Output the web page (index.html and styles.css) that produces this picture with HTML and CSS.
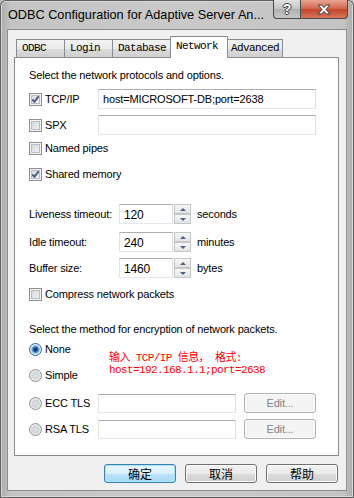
FILE: index.html
```html
<!DOCTYPE html>
<html lang="en">
<head>
    <meta charset="UTF-8">
    <meta name="viewport" content="width=device-width, initial-scale=1.0">
    <title>ODBC Configuration</title>
    <link rel="stylesheet" href="styles.css">
</head>
<body>

<div class="window">
    <div class="titlebar">
        <span class="title">ODBC Configuration for Adaptive Server An...</span>
        <div class="caption-buttons">
            <div class="cap-btn help">?</div>
            <div class="cap-btn close">
                <svg width="14" height="11" viewBox="0 0 14 11">
                    <path d="M1 1 L4.5 1 L7 3.6 L9.5 1 L13 1 L9 5.5 L13 10 L9.5 10 L7 7.4 L4.5 10 L1 10 L5 5.5 Z" fill="#fff" stroke="#3c3c3c" stroke-width="1" stroke-linejoin="round"/>
                </svg>
            </div>
        </div>
    </div>

    <div class="client">
        <div class="tabs">
            <div class="tab t-odbc">ODBC</div>
            <div class="tab t-login">Login</div>
            <div class="tab t-db">Database</div>
            <div class="tab t-net selected">Network</div>
            <div class="tab t-adv">Advanced</div>
        </div>

        <div class="panel">
            <div class="row r-heading">Select the network protocols and options.</div>

            <div class="row r-tcp">
                <span class="check-label"><span class="chk checked"></span>TCP/IP</span>
                <span class="textbox wide">host=MICROSOFT-DB;port=2638</span>
            </div>
            <div class="row r-spx">
                <span class="check-label"><span class="chk"></span>SPX</span>
                <span class="textbox wide"></span>
            </div>
            <div class="row r-pipes">
                <span class="check-label"><span class="chk"></span>Named pipes</span>
            </div>
            <div class="row r-shared">
                <span class="check-label"><span class="chk checked"></span>Shared memory</span>
            </div>

            <div class="row r-live">
                <span class="field-label">Liveness timeout:</span>
                <span class="textbox num">120</span>
                <span class="spinner"><span class="spin up"></span><span class="spin down"></span></span>
                <span class="unit">seconds</span>
            </div>
            <div class="row r-idle">
                <span class="field-label">Idle timeout:</span>
                <span class="textbox num">240</span>
                <span class="spinner"><span class="spin up"></span><span class="spin down"></span></span>
                <span class="unit">minutes</span>
            </div>
            <div class="row r-buf">
                <span class="field-label">Buffer size:</span>
                <span class="textbox num">1460</span>
                <span class="spinner"><span class="spin up"></span><span class="spin down"></span></span>
                <span class="unit">bytes</span>
            </div>
            <div class="row r-compress">
                <span class="check-label"><span class="chk"></span>Compress network packets</span>
            </div>

            <div class="row r-heading2">Select the method for encryption of network packets.</div>

            <div class="enc-top">
                <div class="enc-radios">
                    <div class="row r-none"><span class="radio-label"><span class="radio on"></span>None</span></div>
                    <div class="row r-simple"><span class="radio-label"><span class="radio"></span>Simple</span></div>
                </div>
                <div class="note">
                    <div>输入 TCP/IP 信息， 格式:</div>
                    <div>host=192.168.1.1;port=2638</div>
                </div>
            </div>
            <div class="row r-ecc">
                <span class="radio-label"><span class="radio"></span>ECC TLS</span>
                <span class="textbox tls"></span>
                <span class="btn disabled">Edit...</span>
            </div>
            <div class="row r-rsa">
                <span class="radio-label"><span class="radio"></span>RSA TLS</span>
                <span class="textbox tls"></span>
                <span class="btn disabled">Edit...</span>
            </div>
        </div>

        <div class="actions">
            <span class="btn dlg default">确定</span>
            <span class="btn dlg">取消</span>
            <span class="btn dlg">帮助</span>
        </div>
    </div>
</div>

</body>
</html>
```

FILE: styles.css
```css
body {
    margin: 0;
    background: #bdbdbd;
    font-family: "Liberation Sans", Arial, "Noto Sans CJK SC", sans-serif;
    font-size: 11px;
    letter-spacing: -0.15px;
    color: #000;
}
.window {
    width: 354px;
    height: 498px;
    box-sizing: border-box;
    padding: 0 7px 7px 7px;
    background: linear-gradient(90deg, #a9a9a9 0, #c4c4c4 3%, #c9c9c9 50%, #c4c4c4 97%, #a9a9a9 100%);
    box-shadow: inset 0 0 0 1px #5f5f5f, inset 0 0 0 2px #d8d8d8;
    border-radius: 6px 6px 0 0;
    display: flex;
    flex-direction: column;
}
.titlebar {
    height: 29px;
    display: flex;
    justify-content: space-between;
}
.title {
    margin-top: 7px;
    margin-left: 1px;
    font-size: 12.7px;
    letter-spacing: 0;
    line-height: 16px;
    white-space: nowrap;
}
.caption-buttons {
    display: flex;
    margin-right: -1px;
    height: 19px;
}
.cap-btn {
    height: 19px;
    box-sizing: border-box;
    border: 1px solid #4a4a4a;
    border-top: none;
    display: flex;
    align-items: center;
    justify-content: center;
}
.help {
    width: 27px;
    border-right: none;
    border-radius: 0 0 0 4px;
    background: linear-gradient(#e2e2e2, #c4c4c4 50%, #aeaeae 51%, #c8c8c8);
    color: #fff;
    font-weight: bold;
    font-size: 14px;
    text-shadow: 0 0 1px #333, 1px 0 0 #444, -1px 0 0 #444, 0 1px 0 #444, 0 -1px 0 #444;
}
.close {
    width: 48px;
    border-radius: 0 0 4px 0;
    background: linear-gradient(#e8a593, #d46b50 45%, #c2452a 55%, #d5785c);
}
.client {
    flex: 1;
    background: #f0f0f0;
    border: 1px solid #8e8e8e;
}
.tabs {
    display: flex;
    align-items: flex-end;
    height: 21px;
    margin-top: 6px;
    margin-left: 8px;
    position: relative;
    z-index: 1;
}
.tab {
    height: 18px;
    box-sizing: border-box;
    border: 1px solid #898c95;
    border-bottom: none;
    border-right: none;
    background: linear-gradient(#f2f2f2, #ebebeb 50%, #dddddd 51%, #cfcfcf);
    font-family: "Liberation Mono", "Noto Sans CJK SC", monospace;
    font-size: 11px;
    letter-spacing: -0.6px;
    line-height: 17px;
    padding-left: 5px;
}
.t-odbc { width: 48px; }
.t-login { width: 48px; }
.t-db { width: 60px; }
.t-net { width: 54px; }
.t-adv { width: 57px; border-right: 1px solid #898c95; }
.tab.selected {
    width: 58px;
    height: 22px;
    margin: 0 -2px -1px -2px;
    background: #fff;
    border-right: 1px solid #898c95;
    line-height: 18px;
    position: relative;
    z-index: 2;
}
.tab.selected + .tab { border-left: none; }
.panel {
    margin-left: 6px;
    width: 325px;
    height: 399px;
    box-sizing: border-box;
    border: 1px solid #898c95;
    background: #fff;
    padding: 9px 0 0 14px;
}
.row {
    display: flex;
    align-items: center;
    height: 20px;
    white-space: nowrap;
}
.r-heading { height: 16px; }
.r-tcp { margin-top: 6px; }
.r-spx { margin-top: 6px; }
.r-pipes { margin-top: 3px; }
.r-shared { margin-top: 6px; }
.r-live { margin-top: 20px; }
.r-idle { margin-top: 8px; }
.r-buf { margin-top: 6px; }
.r-compress { margin-top: 6px; }
.r-heading2 { margin-top: 17px; height: 16px; }
.enc-top {
    display: flex;
    margin-top: 2px;
}
.r-simple { margin-top: 6px; }
.r-ecc { margin-top: 8px; }
.r-rsa { margin-top: 6px; }
.check-label, .radio-label {
    display: flex;
    align-items: center;
    gap: 3px;
    width: 69px;
}
.chk {
    width: 13px;
    height: 13px;
    box-sizing: border-box;
    border: 1px solid #8e8f8f;
    background: linear-gradient(135deg, #d0d3d8, #f7f7f7);
    box-shadow: inset 0 0 0 1px #f4f4f4, inset 0 0 0 2px #b9bdc3;
    flex-shrink: 0;
}
.chk.checked {
    background-image: url("data:image/svg+xml,%3Csvg xmlns='http://www.w3.org/2000/svg' width='11' height='11' viewBox='0 0 11 11'%3E%3Cpath d='M2.2 5.4 L4.4 7.8 L8.8 2.2' fill='none' stroke='%234a5b86' stroke-width='1.9'/%3E%3C/svg%3E"), linear-gradient(135deg, #d0d3d8, #f7f7f7);
    background-position: center;
    background-repeat: no-repeat;
}
.radio {
    width: 13px;
    height: 13px;
    box-sizing: border-box;
    border-radius: 50%;
    border: 1px solid #8e8f8f;
    background: radial-gradient(circle at 50% 50%, #e2e4e7 0, #cfd2d7 3px, #f4f4f4 6px);
    flex-shrink: 0;
}
.radio.on {
    border-color: #2c628b;
    background: radial-gradient(circle at 50% 50%, #0f2a57 0, #1f4a8a 1.8px, #5fa1db 3.2px, #cfe6f9 4.6px, #f4f4f4 5.5px);
}
.textbox {
    height: 20px;
    box-sizing: border-box;
    border: 1px solid #abadb3;
    border-color: #abadb3 #dbdfe6 #e3e9ef #e2e3ea;
    background: #fff;
    padding: 2px 0 0 4px;
    line-height: 15px;
}
.wide {
    width: 218px;
}
.field-label {
    width: 90px;
}
.num {
    width: 54px;
    font-size: 12px;
    padding-top: 3px;
}
.spinner {
    width: 17px;
    height: 20px;
    margin-left: 1px;
    display: flex;
    flex-direction: column;
}
.spin {
    height: 10px;
    box-sizing: border-box;
    border: 1px solid #c6c6c6;
    background: linear-gradient(#f7f7f7, #e3e3e3);
    display: flex;
    align-items: center;
    justify-content: center;
}
.spin::after {
    content: "";
    border-left: 3px solid transparent;
    border-right: 3px solid transparent;
}
.spin.up::after { border-bottom: 3px solid #4d6185; }
.spin.down::after { border-top: 3px solid #4d6185; }
.unit {
    margin-left: 6px;
}
.note {
    margin-left: 11px;
    margin-top: 13px;
    color: #ff0000;
    font-family: "Liberation Mono", "Noto Sans CJK SC", monospace;
    font-size: 11px;
    letter-spacing: -0.6px;
    line-height: 12px;
}
.tls {
    width: 138px;
    height: 19px;
}
.btn {
    display: flex;
    align-items: center;
    justify-content: center;
    box-sizing: border-box;
    border: 1px solid #707070;
    border-radius: 3px;
    background: linear-gradient(#f2f2f2, #ebebeb 50%, #dddddd 51%, #cfcfcf);
    box-shadow: inset 0 0 0 1px #fcfcfc;
}
.btn.disabled {
    width: 72px;
    height: 20px;
    margin-left: 8px;
    border-color: #adb2b5;
    background: #f4f4f4;
    color: #838383;
}
.actions {
    display: flex;
    justify-content: flex-end;
    gap: 9px;
    margin-top: 8px;
    padding-right: 8px;
}
.btn.dlg {
    width: 72px;
    height: 19px;
    font-family: "Noto Sans CJK SC", sans-serif;
    font-size: 12px;
    letter-spacing: 0;
}
.btn.default {
    border-color: #3c7fb1;
    background: linear-gradient(#eaf6fd, #d9f0fc 50%, #bee6fd 51%, #a7d9f5);
    box-shadow: inset 0 0 0 1px #a7e4f8;
}
```
